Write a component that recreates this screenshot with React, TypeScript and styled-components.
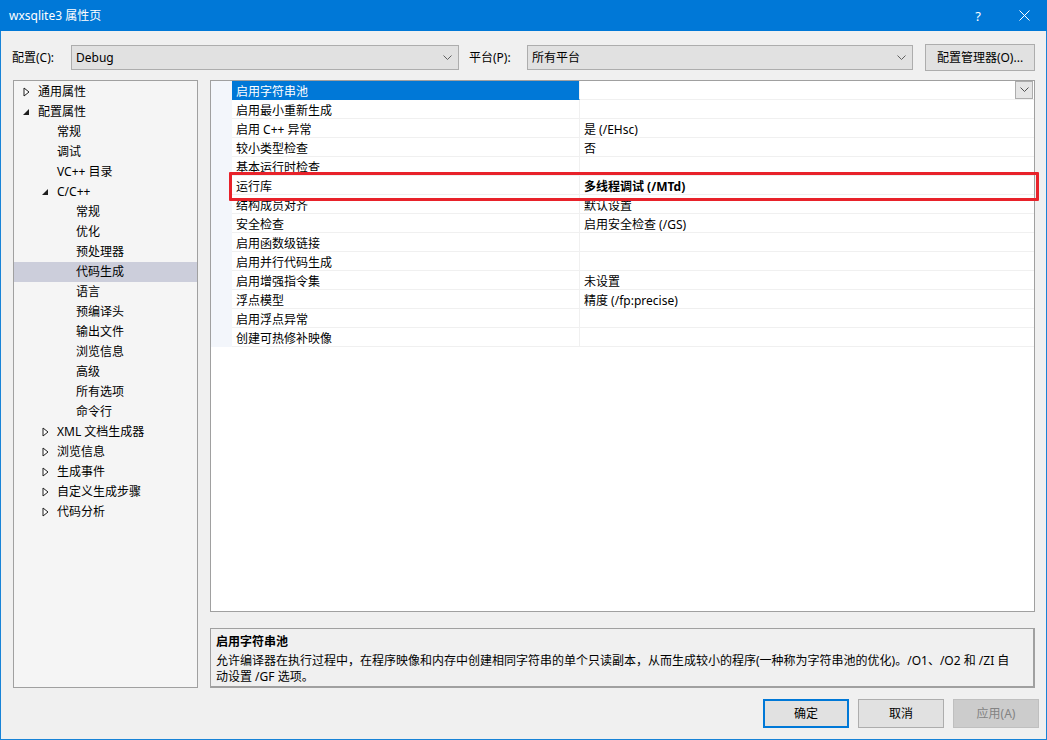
import React from "react";
import styled, { createGlobalStyle } from "styled-components";

const Global = createGlobalStyle`
  html, body { margin: 0; padding: 0; background: #f0f0f0; }
  body { font-family: "Noto Sans", "Noto Sans CJK SC", sans-serif; font-size: 12px; color: #000; }
  * { box-sizing: border-box; }
`;

const FONT = `"Noto Sans", "Noto Sans CJK SC", sans-serif`;

const Window = styled.div`
  width: 1047px;
  height: 740px;
  display: flex;
  flex-direction: column;
  background: #f0f0f0;
  border: 1px solid #1883d7;
  border-top: none;
  position: relative;
  font-family: ${FONT};
  font-size: 12px;
`;

const TitleBar = styled.div`
  height: 31px;
  background: #0078d7;
  color: #fff;
  display: flex;
  align-items: center;
  padding-left: 9px;
  margin: 0 -1px;
  flex: none;
`;

const Title = styled.div`
  flex: 1;
  font-size: 12px;
  line-height: 16px;
`;

const TitleButton = styled.div<{ $w: number }>`
  width: ${(p) => p.$w}px;
  height: 31px;
  display: flex;
  align-items: center;
  justify-content: center;
  color: #fff;
  font-size: 13px;
`;

const ConfigRow = styled.div`
  display: flex;
  align-items: center;
  height: 27px;
  margin-top: 13px;
  padding-left: 11px;
`;

const Label = styled.div<{ $w: number }>`
  width: ${(p) => p.$w}px;
  line-height: 16px;
`;

const Combo = styled.div<{ $w: number }>`
  width: ${(p) => p.$w}px;
  height: 25px;
  background: #e1e1e1;
  border: 1px solid #adadad;
  display: flex;
  align-items: center;
  padding-left: 4px;
  padding-right: 6px;
  line-height: 16px;
`;

const ComboText = styled.div`
  flex: 1;
`;

const Button = styled.div<{ $w: number; $kind?: "default" | "normal" | "disabled" }>`
  width: ${(p) => p.$w}px;
  height: ${(p) => (p.$kind ? 29 : 27)}px;
  display: flex;
  align-items: center;
  justify-content: center;
  background: ${(p) => (p.$kind === "disabled" ? "#cccccc" : "#e1e1e1")};
  border: ${(p) =>
    p.$kind === "default" ? "2px solid #0078d7" : p.$kind === "disabled" ? "1px solid #bfbfbf" : "1px solid #adadad"};
  color: ${(p) => (p.$kind === "disabled" ? "#838383" : "#000")};
  line-height: 16px;
`;

const Main = styled.div`
  display: flex;
  height: 608px;
  margin-top: 9px;
  padding-left: 12px;
  gap: 12px;
`;

const Tree = styled.div`
  width: 185px;
  height: 608px;
  background: #f5f5f5;
  border: 1px solid #a0a0a0;
  display: flex;
  flex-direction: column;
  padding-top: 1px;
`;

const TreeItem = styled.div<{ $level: number; $selected?: boolean }>`
  height: 20px;
  display: flex;
  align-items: center;
  padding-left: ${(p) => 7 + p.$level * 19}px;
  background: ${(p) => (p.$selected ? "#cccedb" : "transparent")};
  line-height: 16px;
`;

const Arrow = styled.span`
  width: 12px;
  display: inline-flex;
  align-items: center;
  margin-left: 2px;
`;

const TreeText = styled.span`
  margin-left: 3px;
`;

const RightCol = styled.div`
  width: 825px;
  display: flex;
  flex-direction: column;
  gap: 16px;
`;

const Grid = styled.div`
  height: 532px;
  background: #fff;
  border: 1px solid #a0a0a0;
  display: flex;
  flex-direction: column;
`;

const Row = styled.div`
  height: 19px;
  display: flex;
  background: #fff;
  flex: none;
`;

const Gutter = styled.div`
  width: 21px;
  background: #f3f6fb;
  flex: none;
`;

const NameCell = styled.div<{ $selected?: boolean }>`
  width: 348px;
  flex: none;
  padding-left: 4px;
  padding-top: 3px;
  display: flex;
  align-items: center;
  background: ${(p) => (p.$selected ? "#0078d7" : "#fff")};
  color: ${(p) => (p.$selected ? "#fff" : "#000")};
  border-bottom: ${(p) => (p.$selected ? "1px solid #0078d7" : "1px solid #f0f0f0")};
  border-right: 1px solid #f0f0f0;
  line-height: 16px;
`;

const ValueCell = styled.div<{ $bold?: boolean }>`
  flex: 1;
  padding-left: 4px;
  padding-top: 3px;
  display: flex;
  align-items: center;
  border-bottom: 1px solid #f0f0f0;
  font-weight: ${(p) => (p.$bold ? 700 : 400)};
  line-height: 16px;
`;

const ValueText = styled.div`
  flex: 1;
`;

const DropButton = styled.div`
  width: 18px;
  height: 18px;
  margin-top: -3px;
  background: #e5e5e5;
  border: 1px solid #adadad;
  display: flex;
  align-items: center;
  justify-content: center;
  margin-right: 1px;
`;

const Desc = styled.div`
  height: 60px;
  background: #f0f0f0;
  border: 1px solid #a0a0a0;
  border-right-width: 2px;
  border-bottom-width: 2px;
  padding: 5px 5px 0;
  line-height: 16px;
`;

const DescTitle = styled.div`
  font-weight: 700;
  margin-bottom: 3px;
`;

const Footer = styled.div`
  display: flex;
  justify-content: flex-end;
  gap: 9px;
  margin-top: 11px;
  padding-right: 7px;
`;

const Highlight = styled.div`
  position: absolute;
  left: 228px;
  top: 172px;
  width: 810px;
  height: 29px;
  border: 3px solid #e8222a;
  border-radius: 1px;
  pointer-events: none;
`;

const Chevron = ({ color = "#606060" }: { color?: string }) => (
  <svg width="9" height="6" viewBox="0 0 9 6">
    <polyline points="0.5,0.5 4.5,4.5 8.5,0.5" fill="none" stroke={color} strokeWidth="1" />
  </svg>
);

const Collapsed = () => (
  <svg width="7" height="10" viewBox="0 0 7 10">
    <polygon points="1,1 6,5 1,9" fill="#fff" stroke="#1e1e1e" strokeWidth="1" />
  </svg>
);

const Expanded = () => (
  <svg width="7" height="7" viewBox="0 0 7 7">
    <polygon points="6,0 6,6 0,6" fill="#1e1e1e" />
  </svg>
);

type TreeNode = { text: string; level: number; arrow?: "c" | "e"; selected?: boolean };

const treeNodes: TreeNode[] = [
  { text: "通用属性", level: 0, arrow: "c" },
  { text: "配置属性", level: 0, arrow: "e" },
  { text: "常规", level: 1 },
  { text: "调试", level: 1 },
  { text: "VC++ 目录", level: 1 },
  { text: "C/C++", level: 1, arrow: "e" },
  { text: "常规", level: 2 },
  { text: "优化", level: 2 },
  { text: "预处理器", level: 2 },
  { text: "代码生成", level: 2, selected: true },
  { text: "语言", level: 2 },
  { text: "预编译头", level: 2 },
  { text: "输出文件", level: 2 },
  { text: "浏览信息", level: 2 },
  { text: "高级", level: 2 },
  { text: "所有选项", level: 2 },
  { text: "命令行", level: 2 },
  { text: "XML 文档生成器", level: 1, arrow: "c" },
  { text: "浏览信息", level: 1, arrow: "c" },
  { text: "生成事件", level: 1, arrow: "c" },
  { text: "自定义生成步骤", level: 1, arrow: "c" },
  { text: "代码分析", level: 1, arrow: "c" },
];

const props: { name: string; value: string; bold?: boolean }[] = [
  { name: "启用字符串池", value: "" },
  { name: "启用最小重新生成", value: "" },
  { name: "启用 C++ 异常", value: "是 (/EHsc)" },
  { name: "较小类型检查", value: "否" },
  { name: "基本运行时检查", value: "" },
  { name: "运行库", value: "多线程调试 (/MTd)", bold: true },
  { name: "结构成员对齐", value: "默认设置" },
  { name: "安全检查", value: "启用安全检查 (/GS)" },
  { name: "启用函数级链接", value: "" },
  { name: "启用并行代码生成", value: "" },
  { name: "启用增强指令集", value: "未设置" },
  { name: "浮点模型", value: "精度 (/fp:precise)" },
  { name: "启用浮点异常", value: "" },
  { name: "创建可热修补映像", value: "" },
];

export default function App() {
  return (
    <>
      <Global />
      <Window>
        <TitleBar>
          <Title>wxsqlite3 属性页</Title>
          <TitleButton $w={46}>?</TitleButton>
          <TitleButton $w={46}>
            <svg width="11" height="11" viewBox="0 0 11 11">
              <path d="M0.5 0.5 L10.5 10.5 M10.5 0.5 L0.5 10.5" stroke="#fff" strokeWidth="1" />
            </svg>
          </TitleButton>
        </TitleBar>

        <ConfigRow>
          <Label $w={59}>配置(C):</Label>
          <Combo $w={388}>
            <ComboText>Debug</ComboText>
            <Chevron />
          </Combo>
          <Label $w={58} style={{ marginLeft: 10 }}>平台(P):</Label>
          <Combo $w={386}>
            <ComboText>所有平台</ComboText>
            <Chevron />
          </Combo>
          <Button $w={110} style={{ marginLeft: 12 }}>配置管理器(O)...</Button>
        </ConfigRow>

        <Main>
          <Tree>
            {treeNodes.map((n, i) => (
              <TreeItem key={i} $level={n.level} $selected={n.selected}>
                <Arrow>{n.arrow === "c" ? <Collapsed /> : n.arrow === "e" ? <Expanded /> : null}</Arrow>
                <TreeText>{n.text}</TreeText>
              </TreeItem>
            ))}
          </Tree>

          <RightCol>
            <Grid>
              {props.map((p, i) => (
                <Row key={i}>
                  <Gutter />
                  <NameCell $selected={i === 0}>{p.name}</NameCell>
                  <ValueCell $bold={p.bold}>
                    <ValueText>{p.value}</ValueText>
                    {i === 0 && (
                      <DropButton>
                        <Chevron color="#505050" />
                      </DropButton>
                    )}
                  </ValueCell>
                </Row>
              ))}
            </Grid>
            <Desc>
              <DescTitle>启用字符串池</DescTitle>
              <div>
                允许编译器在执行过程中，在程序映像和内存中创建相同字符串的单个只读副本，从而生成较小的程序(一种称为字符串池的优化)。/O1、/O2 和 /ZI 自
                <br />
                动设置 /GF 选项。
              </div>
            </Desc>
          </RightCol>
        </Main>

        <Footer>
          <Button $w={86} $kind="default">确定</Button>
          <Button $w={86} $kind="normal">取消</Button>
          <Button $w={86} $kind="disabled">应用(A)</Button>
        </Footer>

        <Highlight />
      </Window>
    </>
  );
}
